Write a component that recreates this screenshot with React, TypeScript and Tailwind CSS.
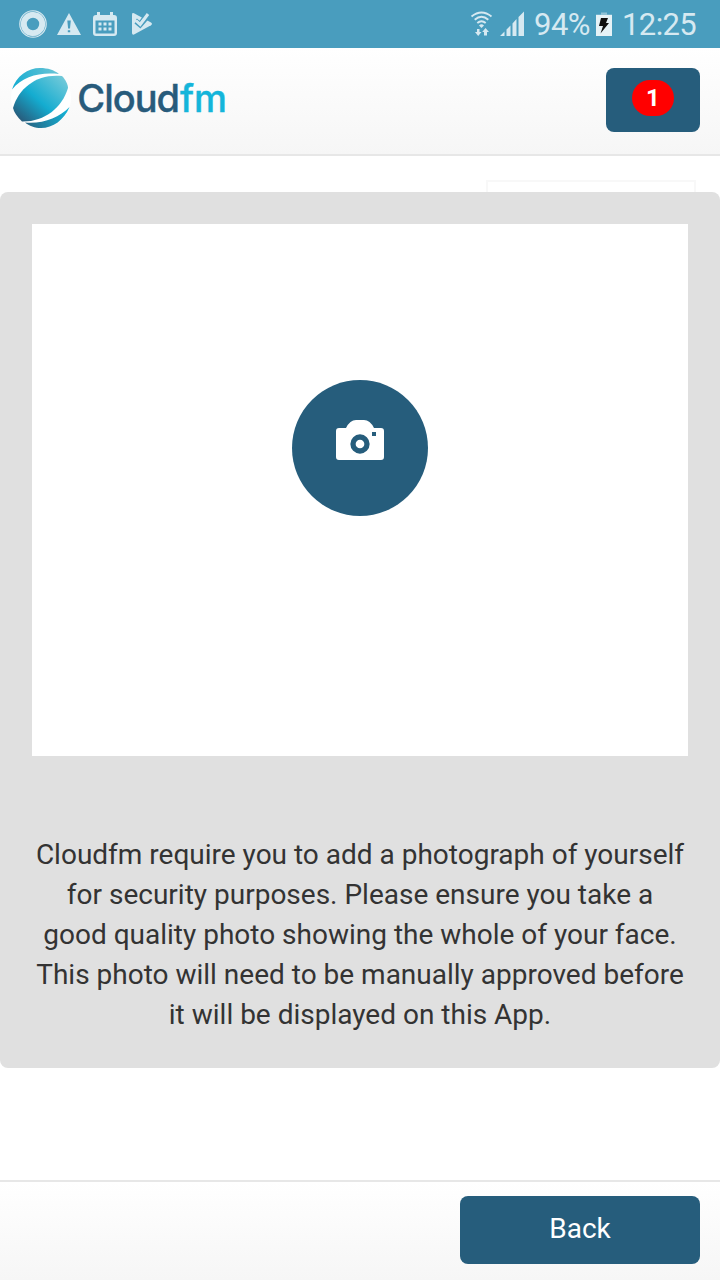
function StatusBar() {
  return (
    <div className="flex h-12 shrink-0 items-center justify-between bg-[#499dbe] text-[#d6e9f1]">
      <svg width="180" height="48" viewBox="0 0 180 48" fill="currentColor">
        <circle cx="33" cy="24" r="9.2" fill="none" stroke="currentColor" strokeWidth="6" />
        <circle cx="33" cy="24" r="13.2" fill="none" stroke="currentColor" strokeWidth="1.2" />
        <path d="M23 16.5Q29 9 37 12.5M43 31Q37 39 28 35.5" fill="none" stroke="#78b6ce" strokeWidth=".7" />
        <path fillRule="evenodd" d="M69 13L81 35H57ZM67.3 20.5L68.1 28.5H70L70.8 20.5ZM67.8 30.3V32.3H70.2V30.3Z" />
        <path
          fillRule="evenodd"
          d="M96 15H97V12H100V15H110V12H113V15H114Q117 15 117 18V33Q117 36 114 36H96Q93 36 93 33V18Q93 15 96 15ZM95.5 20.5V33.5H114.5V20.5Z"
        />
        <path d="M98.5 22.5h3v3h-3zM103.5 22.5h3v3h-3zM108.5 22.5h3v3h-3zM98.5 27.5h3v3h-3zM103.5 27.5h3v3h-3zM108.5 27.5h3v3h-3z" />
        <path d="M132 14.5Q132 12.5 134 13.2L151 22.5Q153 24 151 25.2L134 34.6Q132 35 132 33Z" />
        <path d="M135.2 22.6L140.3 27L149 17" fill="none" stroke="#499dbe" strokeWidth="2.2" />
        <path d="M136.5 19L139.6 21.8L144.5 15" fill="none" stroke="#499dbe" strokeWidth="1.4" />
        <path d="M136 20.6L140.2 24.5L148 14" fill="none" stroke="currentColor" strokeWidth="3" />
      </svg>
      <div className="flex h-12 items-center pr-[23px] font-[Roboto,sans-serif] text-[31px] leading-[48px]">
        <svg className="mr-[9px]" width="55" height="48" viewBox="470 0 55 48" fill="currentColor">
          <g fill="none" stroke="currentColor" strokeWidth="1.9">
            <path d="M471.5 16.5Q481.5 8.5 491.5 16.5" />
            <path d="M474.7 19.7Q481.5 14 488.3 19.7" />
            <path d="M477.3 23Q481.5 19.3 485.7 23" />
          </g>
          <path d="M479 25.5Q481.5 23 484 25.5L481.5 28Z" />
          <path d="M477 29H479.5V32H481.5L478.2 36L475 32H477ZM484 35.5H487V32H489L485.5 28L482.2 32H484Z" />
          <path d="M500 36L504.5 31.5V36ZM506.5 29.5L510.5 25.5V36H506.5ZM512.5 23.5L516.5 19V36H512.5ZM518.5 17L524 11.5V36H518.5Z" />
        </svg>
        <span className="w-[62px] pt-[2px] tracking-[-0.5px]">94%</span>
        <svg className="mr-[10px]" width="16" height="48" viewBox="0 0 16 48">
          <path d="M5 12.5h6v2H16v2H0v-2h5z" fill="#8fc2d6" />
          <path d="M0 15h16v21H0z" fill="#e6f2f6" />
          <path d="M5 18H12L10 23H13L4.5 33.5L7 26H3Z" fill="#101010" />
        </svg>
        <span className="w-[75px] pt-[2px] tracking-[-0.6px]">12:25</span>
      </div>
    </div>
  );
}

function Logo() {
  return (
    <svg width="240" height="80" viewBox="0 58 240 80" role="img" aria-label="Cloudfm">
      <defs>
        <linearGradient id="globe" x1="20" y1="120" x2="60" y2="75" gradientUnits="userSpaceOnUse">
          <stop offset="0" stopColor="#285b7b" />
          <stop offset=".45" stopColor="#14acd0" />
          <stop offset="1" stopColor="#71c9d9" />
        </linearGradient>
        <linearGradient id="top" x1="12" y1="88" x2="60" y2="70" gradientUnits="userSpaceOnUse">
          <stop offset="0" stopColor="#12acd1" />
          <stop offset="1" stopColor="#6dc5d6" />
        </linearGradient>
        <linearGradient id="bottom" x1="24" y1="127" x2="67" y2="108" gradientUnits="userSpaceOnUse">
          <stop offset="0" stopColor="#28617f" />
          <stop offset="1" stopColor="#13b4d8" />
        </linearGradient>
      </defs>
      <circle cx="41" cy="98" r="30" fill="#fff" />
      <path d="M12 89.5C16 76 28 68 40 68C48 68 54 70 59 74C40 72 23 76 12 89.5Z" fill="url(#top)" />
      <path d="M13 108C19 87 38 73.5 62 76C66 80 68 85 68 88C62 108 44 122 22 121.5C17 117 14 112 13 108Z" fill="url(#globe)" />
      <path d="M25 122.5C43 124 59 118 69.5 107C64 120 53 128 41 128C35 128 29 126 25 122.5Z" fill="url(#bottom)" />
      <g fontFamily="Inter, sans-serif" fontSize="38" fontWeight="500" strokeWidth=".4">
        <text x="77.3" y="111.7" textLength="102" lengthAdjust="spacing" letterSpacing="-0.8" stroke="#285b7b" fill="#285b7b">Cloud</text>
        <text x="180" y="111.7" textLength="47" lengthAdjust="spacingAndGlyphs" stroke="#14b5da" fill="#14b5da">fm</text>
      </g>
    </svg>
  );
}

export default function App() {
  return (
    <div className="flex h-[1280px] w-[720px] flex-col overflow-hidden bg-white font-[Roboto,sans-serif] text-[28px] text-[#333]">
      <StatusBar />
      <header className="flex h-[108px] shrink-0 items-start justify-between border-b-2 border-[#e7e7e7] bg-linear-to-b from-white to-[#f6f6f6] pt-[10px] pr-5">
        <Logo />
        <button className="mt-[10px] flex h-16 w-[94px] items-start justify-center rounded-lg bg-[#265d7c] pt-3">
          <span className="flex h-9 w-[42px] items-center justify-center rounded-[18px] bg-[#f00] text-2xl font-bold text-white">1</span>
        </button>
      </header>
      <main className="flex grow flex-col">
        <div className="mt-6 mr-6 h-3 w-[210px] shrink-0 self-end border-2 border-b-0 border-[#f8f8f8]" />
        <section className="flex h-[876px] shrink-0 flex-col rounded-lg bg-[#e0e0e0] px-8 pt-8">
          <div className="flex h-[532px] shrink-0 justify-center bg-white pt-[156px]">
            <button aria-label="Take photo" className="flex size-[136px] justify-center rounded-full bg-[#265d7c] pt-10">
              <svg width="48" height="40" viewBox="0 0 48 40">
                <path d="M3 8H10Q14 0 20 0H28Q34 0 38 8H45Q48 8 48 11V37Q48 40 45 40H3Q0 40 0 37V11Q0 8 3 8Z" fill="#fff" />
                <circle cx="24" cy="24" r="7" fill="none" stroke="#265d7c" strokeWidth="5.3" />
                <path d="M36 12h4v4h-4z" fill="#265d7c" />
              </svg>
            </button>
          </div>
          <p className="mt-[79px] text-center leading-10 whitespace-nowrap">
            Cloudfm require you to add a photograph of yourself<br />
            for security purposes. Please ensure you take a<br />
            good quality photo showing the whole of your face.<br />
            This photo will need to be manually approved before<br />
            it will be displayed on this App.
          </p>
        </section>
      </main>
      <footer className="flex h-[100px] shrink-0 items-start justify-end border-t-2 border-[#e7e7e7] bg-linear-to-b from-white to-[#f6f6f6] pt-[14px] pr-5">
        <button className="flex h-[68px] w-60 items-center justify-center rounded-lg bg-[#265d7c] pb-[3px] text-white">Back</button>
      </footer>
    </div>
  );
}
